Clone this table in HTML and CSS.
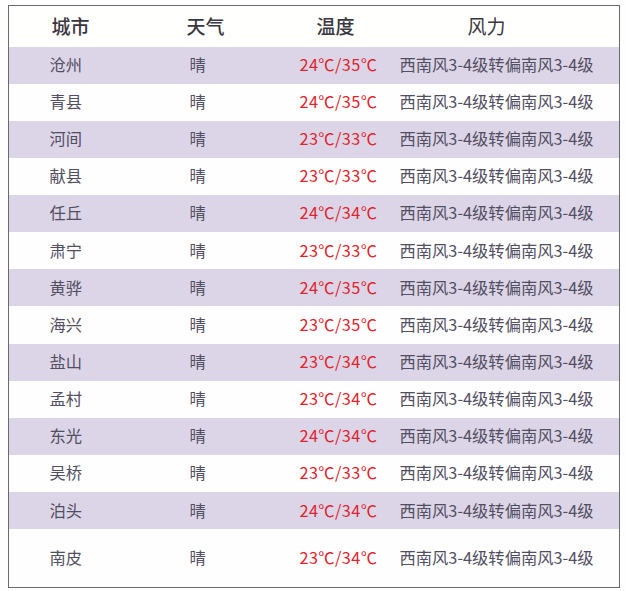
FILE: index.html
```html
<!DOCTYPE html>
<html lang="zh-CN">
<head>
<meta charset="utf-8">
<title>天气</title>
<link rel="stylesheet" href="styles.css">
</head>
<body>
<div class="table">
  <div class="head">
    <div>城市</div><div>天气</div><div>温度</div><div>风力</div>
  </div>
  <div class="row alt"><div>沧州</div><div>晴</div><div class="t">24℃/35℃</div><div>西南风3-4级转偏南风3-4级</div></div>
  <div class="row"><div>青县</div><div>晴</div><div class="t">24℃/35℃</div><div>西南风3-4级转偏南风3-4级</div></div>
  <div class="row alt"><div>河间</div><div>晴</div><div class="t">23℃/33℃</div><div>西南风3-4级转偏南风3-4级</div></div>
  <div class="row"><div>献县</div><div>晴</div><div class="t">23℃/33℃</div><div>西南风3-4级转偏南风3-4级</div></div>
  <div class="row alt"><div>任丘</div><div>晴</div><div class="t">24℃/34℃</div><div>西南风3-4级转偏南风3-4级</div></div>
  <div class="row"><div>肃宁</div><div>晴</div><div class="t">23℃/33℃</div><div>西南风3-4级转偏南风3-4级</div></div>
  <div class="row alt"><div>黄骅</div><div>晴</div><div class="t">24℃/35℃</div><div>西南风3-4级转偏南风3-4级</div></div>
  <div class="row"><div>海兴</div><div>晴</div><div class="t">23℃/35℃</div><div>西南风3-4级转偏南风3-4级</div></div>
  <div class="row alt"><div>盐山</div><div>晴</div><div class="t">23℃/34℃</div><div>西南风3-4级转偏南风3-4级</div></div>
  <div class="row"><div>孟村</div><div>晴</div><div class="t">23℃/34℃</div><div>西南风3-4级转偏南风3-4级</div></div>
  <div class="row alt"><div>东光</div><div>晴</div><div class="t">24℃/34℃</div><div>西南风3-4级转偏南风3-4级</div></div>
  <div class="row"><div>吴桥</div><div>晴</div><div class="t">23℃/33℃</div><div>西南风3-4级转偏南风3-4级</div></div>
  <div class="row alt"><div>泊头</div><div>晴</div><div class="t">24℃/34℃</div><div>西南风3-4级转偏南风3-4级</div></div>
  <div class="row last"><div>南皮</div><div>晴</div><div class="t">23℃/34℃</div><div>西南风3-4级转偏南风3-4级</div></div>
</div>
</body>
</html>
```
FILE: styles.css
```css
html, body {
  margin: 0;
  padding: 0;
  background: #fefefe;
}
body {
  font-family: "Noto Sans CJK SC", "Noto Sans", sans-serif;
  color: #524e62;
}
.table {
  margin: 5px 0 0 8px;
  width: 612px;
  border: 1.5px solid #6a6a6a;
  box-sizing: border-box;
  display: flex;
  flex-direction: column;
}
.head {
  height: 40.5px;
  display: grid;
  grid-template-columns: 135px 130px 151px 1fr;
  padding-left: 42.5px;
  align-items: center;
  font-size: 19px;
  font-weight: 500;
  color: #3a3640;
  background: #fffffd;
}
.head div {
  line-height: 1;
  padding-bottom: 1px;
}
.head div:nth-child(4) {
  font-weight: 400;
}
.row {
  height: 37.15px;
  display: grid;
  grid-template-columns: 140px 110px 100px 1fr;
  padding-left: 40.5px;
  align-items: center;
  font-size: 16.3px;
  background: #fefefe;
}
.row div {
  line-height: 1;
  padding-bottom: 2px;
}
.row.alt {
  background: #dcd5e7;
}
.row.last {
  height: 57.5px;
}
.row .t {
  color: #e0232c;
  letter-spacing: 0.4px;
}
```
